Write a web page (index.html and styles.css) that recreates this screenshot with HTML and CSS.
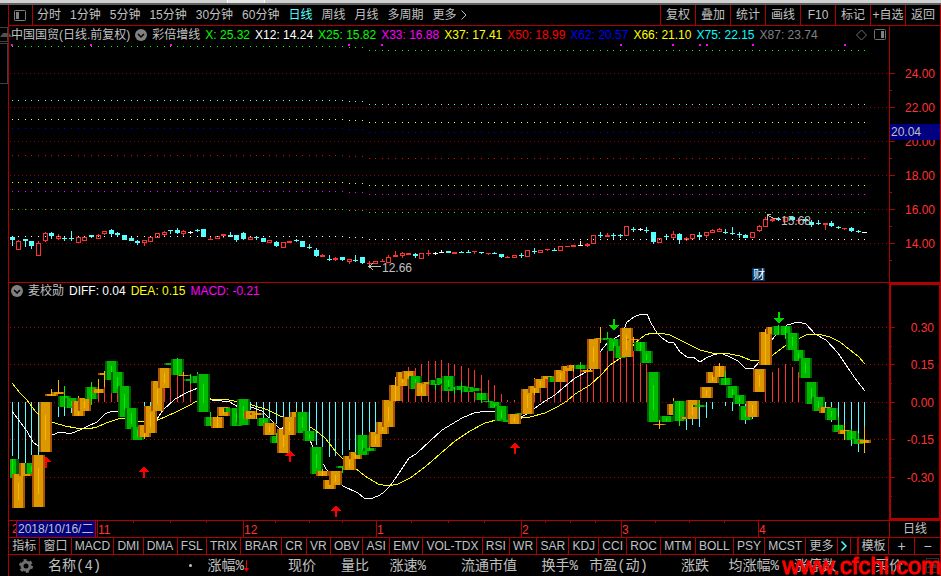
FILE: index.html
```html
<!DOCTYPE html>
<html lang="zh-CN">
<head>
    <meta charset="UTF-8">
    <meta name="viewport" content="width=device-width, initial-scale=1.0">
    <title>中国国贸 日线</title>
    <link rel="stylesheet" href="styles.css">
</head>
<body>
    <div class="window-strip"><span class="strip-tab"></span></div>
    <div class="app">
        <aside class="gutter">
            <div class="gutter-btn"></div>
            <div class="gutter-panel"></div>
        </aside>

        <main class="terminal">
            <nav class="toolbar">
                <button class="layout-btn" aria-label="布局">
                    <svg width="12" height="11" viewBox="0 0 12 11"><rect x="0.5" y="0.5" width="11" height="10" rx="1" fill="none" stroke="#808080"/><rect x="2" y="2" width="3" height="7" fill="#808080"/></svg>
                </button>
                <div class="periods">
                    <button>分时</button>
                    <button>1分钟</button>
                    <button>5分钟</button>
                    <button>15分钟</button>
                    <button>30分钟</button>
                    <button>60分钟</button>
                    <button class="active">日线</button>
                    <button>周线</button>
                    <button>月线</button>
                    <button>多周期</button>
                    <button class="more">更多
                        <svg width="6" height="10" viewBox="0 0 6 10"><path d="M0.5 0.5 L5 5 L0.5 9.5" fill="none" stroke="#c0c0c0"/></svg>
                    </button>
                </div>
                <div class="tools">
                    <button>复权</button>
                    <button>叠加</button>
                    <button>统计</button>
                    <button>画线</button>
                    <button>F10</button>
                    <button>标记</button>
                    <button>+自选</button>
                    <button>返回</button>
                </div>
            </nav>

            <section class="panel price-panel">
                <div class="plot">
                    <div class="legend">
                        <span>中国国贸(日线.前复权)</span>
                        <svg class="drop" viewBox="0 0 12 12"><circle cx="6" cy="6" r="6" fill="#808080"/><path d="M3 5 L6 8 L9 5" fill="none" stroke="#000" stroke-width="1.5"/></svg>
                        <span>彩倍增线</span>
                        <span class="green">X: 25.32</span>
                        <span class="white">X12: 14.24</span>
                        <span class="green">X25: 15.82</span>
                        <span class="magenta">X33: 16.88</span>
                        <span class="yellow">X37: 17.41</span>
                        <span class="red">X50: 18.99</span>
                        <span class="blue">X62: 20.57</span>
                        <span class="yellow">X66: 21.10</span>
                        <span class="cyan">X75: 22.15</span>
                        <span class="gray">X87: 23.74</span>
                        <svg class="legend-icons" width="32" height="12" viewBox="0 0 32 12"><path d="M6.5 1 L11.5 6 L6.5 11 L1.5 6 Z" fill="none" stroke="#707070"/><rect x="19.5" y="0.5" width="11" height="10" rx="1" fill="none" stroke="#707070"/><rect x="26" y="2" width="3" height="7" fill="#808080"/></svg>
                    </div>
                    <svg class="chart" id="price-chart"></svg>
                </div>
                <svg class="axis" id="price-axis"></svg>
            </section>

            <section class="panel macd-panel">
                <div class="plot">
                    <div class="legend">
                        <svg class="drop" viewBox="0 0 12 12"><circle cx="6" cy="6" r="6" fill="#808080"/><path d="M3 5 L6 8 L9 5" fill="none" stroke="#000" stroke-width="1.5"/></svg>
                        <span>麦校勋</span>
                        <span class="white">DIFF: 0.04</span>
                        <span class="yellow">DEA: 0.15</span>
                        <span class="magenta">MACD: -0.21</span>
                    </div>
                    <svg class="chart" id="macd-chart"></svg>
                </div>
                <svg class="axis" id="macd-axis"></svg>
            </section>

            <div class="time-row">
                <svg id="time-axis"></svg>
                <div class="time-period">日线</div>
            </div>

            <nav class="tabs">
                <div class="tab-list">
                    <button>指标</button>
                    <button>窗口</button>
                    <button>MACD</button>
                    <button>DMI</button>
                    <button>DMA</button>
                    <button>FSL</button>
                    <button>TRIX</button>
                    <button>BRAR</button>
                    <button>CR</button>
                    <button>VR</button>
                    <button>OBV</button>
                    <button>ASI</button>
                    <button>EMV</button>
                    <button>VOL-TDX</button>
                    <button>RSI</button>
                    <button>WR</button>
                    <button>SAR</button>
                    <button>KDJ</button>
                    <button>CCI</button>
                    <button>ROC</button>
                    <button>MTM</button>
                    <button>BOLL</button>
                    <button>PSY</button>
                    <button>MCST</button>
                    <button>更多</button>
                    <button aria-label="下一页"><svg width="6" height="10" viewBox="0 0 6 10"><path d="M0.5 0.5 L5 5 L0.5 9.5" fill="none" stroke="#54ffff" stroke-width="1.5"/></svg></button>
                </div>
                <button class="template">模板</button>
                <button class="zoom">+</button>
                <button class="zoom">−</button>
            </nav>

            <table class="quotes">
                <thead>
                    <tr>
                        <th class="col-gear"><svg width="14" height="14" viewBox="0 0 14 14"><circle cx="7" cy="7" r="4" fill="none" stroke="#707070" stroke-width="3"/><circle cx="7" cy="7" r="6" fill="none" stroke="#707070" stroke-width="2" stroke-dasharray="3 3.28"/></svg></th>
                        <th class="col-name">名称(4)</th>
                        <th class="col-rise"><span class="dot"></span>涨幅%<svg class="sort" width="5" height="12" viewBox="0 0 5 12"><path d="M2 0 H3 V8 H5 L2.5 12 L0 8 H2 Z" fill="#f00000"/></svg></th>
                        <th class="col-67">现价</th>
                        <th class="col-53">量比</th>
                        <th class="col-57">涨速%</th>
                        <th class="col-91">流通市值</th>
                        <th class="col-61">换手%</th>
                        <th class="col-70">市盈(动)</th>
                        <th class="col-61">涨跌</th>
                        <th class="col-70">均涨幅%</th>
                        <th class="col-57">涨停数</th>
                        <th class="col-67">买价</th>
                        <th><button class="scroll-btn" aria-label="向上"></button></th>
                    </tr>
                </thead>
            </table>
        </main>
    </div>
    <div class="watermark">www.cfchi.com</div>
    <script src="script.js"></script>
</body>
</html>
```
FILE: styles.css
```css
* {
    box-sizing: border-box;
}

body {
    margin: 0;
    min-height: 100vh;
    display: flex;
    flex-direction: column;
    position: relative;
    background: #000;
    color: #c0c0c0;
    font-family: "Liberation Sans", "Noto Sans CJK SC", sans-serif;
    font-size: 12px;
    line-height: 16px;
    overflow-x: hidden;
}

button {
    margin: 0;
    padding: 0;
    border: none;
    background: none;
    color: inherit;
    font: inherit;
    white-space: nowrap;
    cursor: pointer;
}

svg {
    display: block;
}

.window-strip {
    height: 5px;
    padding-left: 227px;
    background: #d0d0d0;
    border-bottom: 2px solid #606060;
}

.strip-tab {
    display: block;
    width: 38px;
    height: 3px;
    background: #e4e4e4;
    border-left: 1px solid #fff;
    border-right: 1px solid #fff;
}

.app {
    flex: 1;
    display: flex;
}

.gutter {
    width: 8px;
    padding-top: 22px;
}

.gutter-btn {
    height: 15px;
    border: 1px solid #404040;
    border-left: none;
}

.gutter-btn::after {
    content: "";
    display: block;
    width: 6px;
    margin-top: 5px;
    border: 3px solid transparent;
    border-top: none;
    border-bottom: 4px solid #505050;
}

.gutter-panel {
    height: 41px;
    margin-top: 1px;
    border: 1px solid #404040;
    border-left: none;
}

.terminal {
    flex: 1;
    min-width: 0;
    border-left: 1px solid #b00000;
    border-right: 1px solid #b00000;
}

/* top toolbar */
.toolbar {
    display: flex;
    height: 21px;
    border-bottom: 1px solid #b00000;
}

.layout-btn {
    width: 24px;
    padding-left: 5px;
    border-right: 1px solid #b00000;
}

.periods {
    flex: 1;
    display: flex;
    align-items: center;
    gap: 9px;
    padding-left: 4px;
}

.periods .active {
    color: #54ffff;
}

.periods .more {
    display: flex;
    align-items: center;
    gap: 4px;
}

.tools {
    display: flex;
}

.tools button {
    width: 35px;
    border-left: 1px solid #b00000;
}

/* chart panels */
.panel {
    display: flex;
}

.plot {
    flex: 1;
    min-width: 0;
}

.price-panel {
    height: 257px;
    border-bottom: 1px solid #b00000;
}

.macd-panel {
    height: 237px;
}

.legend {
    display: flex;
    align-items: center;
    gap: 5px;
    height: 18px;
    padding-left: 2px;
    white-space: nowrap;
}

.macd-panel .legend {
    height: 16px;
}

.drop {
    width: 12px;
    height: 12px;
}

.legend-icons {
    margin-left: auto;
    margin-right: 2px;
}

.green { color: #00ff00; }
.white { color: #ffffff; }
.magenta { color: #ff00ff; }
.yellow { color: #ffff00; }
.red { color: #ff0000; }
.blue { color: #0000ff; }
.cyan { color: #00ffff; }
.gray { color: #808080; }

.chart {
    width: 100%;
    height: 238px;
    shape-rendering: crispEdges;
}

.macd-panel .chart {
    height: 221px;
}

.axis {
    flex: none;
    width: 51px;
    height: 256px;
    border-left: 1px solid #b00000;
    shape-rendering: crispEdges;
}

.macd-panel .axis {
    height: 237px;
    border: 2px solid #b00000;
    border-right-width: 1px;
}

svg text {
    font-size: 12px;
}

/* dates */
.time-row {
    display: flex;
    height: 17px;
    border-top: 1px solid #b00000;
}

#time-axis {
    flex: 1;
    min-width: 0;
    height: 16px;
    shape-rendering: crispEdges;
}

.time-period {
    width: 51px;
    border-left: 1px solid #b00000;
    text-align: center;
}

/* indicator tabs */
.tabs {
    display: flex;
    height: 18px;
    border-top: 1px solid #b00000;
    border-bottom: 1px solid #b00000;
}

.tab-list {
    flex: 1;
    display: flex;
    margin-right: 6px;
    min-width: 0;
}

.tab-list button {
    flex: 1 0 auto;
    display: flex;
    align-items: center;
    justify-content: center;
    padding: 0 3px;
    border-right: 1px solid #b00000;
}

.template {
    width: 31px;
    border-left: 2px solid #b00000;
}

.zoom {
    width: 26px;
    border-left: 1px solid #b00000;
    font-size: 14px;
}

/* quote list header */
.quotes {
    width: 100%;
    table-layout: fixed;
    border-collapse: collapse;
}

.quotes th {
    height: 21px;
    padding: 0;
    font-family: "Liberation Mono", "Noto Sans CJK SC", monospace;
    font-size: 14px;
    font-weight: normal;
    line-height: 20px;
    text-align: right;
    white-space: nowrap;
}

.quotes .col-gear {
    width: 35px;
    padding-left: 10px;
}

.quotes .col-name {
    width: 135px;
    padding-left: 4px;
    text-align: left;
}

.col-rise { width: 70px; }
.col-53 { width: 53px; }
.col-57 { width: 57px; }
.col-61 { width: 61px; }
.col-67 { width: 67px; }
.col-70 { width: 70px; }
.col-91 { width: 91px; }

.dot {
    display: inline-block;
    width: 3px;
    height: 3px;
    margin-right: 16px;
    border-radius: 50%;
    background: #c0c0c0;
    vertical-align: middle;
}

.sort {
    display: inline-block;
    vertical-align: middle;
}

.scroll-btn {
    display: block;
    width: 13px;
    height: 15px;
    margin-left: auto;
    margin-right: 1px;
    border: 1px solid #303030;
}

.scroll-btn::after {
    content: "";
    display: block;
    width: 6px;
    margin: 0 auto;
    border: 3px solid transparent;
    border-top: none;
    border-bottom: 4px solid #303030;
}

.watermark {
    position: absolute;
    right: 0;
    bottom: 0;
    color: #ff0000;
    font-size: 24px;
    line-height: 20px;
    -webkit-text-stroke: 1px #ff0000;
}
```
FILE: script.js
```js
const STEP = 6.61;
const BASE_WIDTH = 880;
const FIRST = 3.6;
const LINE = '#b00000';
const COLORS = { r: '#ff3232', c: '#54ffff', w: '#ffffff' };

// kind, body top, body bottom, high, low
const candles = `c 237 240 236 246,r 241 250 240 250,c 239 241 239 247,c 241 246 241 249,r 243 256 241 256,r 233 241 232 242,c 233 236 232 239,r 236 239 234 240,c 238 239 236 241,c 238 239 231 241,
r 237 243,r 237 241,c 235 237 235 238,r 235 239 234 239,r 231 234 231 235,c 230 234 229 236,c 233 235 232 237,c 235 240,c 238 241 237 241,c 241 243 240 245,
r 240 243 240 246,r 237 242,r 233 238,r 232 235 231 236,c 230 231 230 234,c 230 233 228 234,r 231 234 230 236,w 232 233 231 234,c 230 231 229 232,c 229 237,
r 239 240 237 240,r 236 239,r 234 236 234 238,c 235 237 232 237,c 235 240 235 242,c 233 239 232 240,r 237 240,c 237 238 236 240,c 238 242,r 240 243,
c 242 246 241 247,r 242 248,r 241 243,c 240 241 239 242,c 241 247,c 247 248 244 249,c 250 256 248 257,r 255 257 254 257,c 259 260 255 261,r 258 260 257 261,
c 257 260 257 261,r 259 262 259 264,c 260 261 255 262,c 257 263 257 264,r 263 264 261 265,r 261 264,r 261 262 259 262,r 257 263 255 263,r 255 257 251 257,r 253 256 252 258,
r 253 255,c 254 256 253 258,r 253 259,r 253 254 250 256,w 253 254 252 255,w 252 253 250 253,c 251 253,r 252 254,c 252 253 251 253,c 252 253 250 253,
r 251 252 251 254,c 252 253 252 254,r 253 254 253 255,c 253 254 252 254,c 254 257 254 258,r 257 258 256 258,r 255 258,c 255 256 253 258,r 250 257,c 251 252 248 254,
r 250 253,r 249 250 249 251,c 250 251 248 251,r 246 251,r 246 247,r 245 247,w 245 246 241 246,r 244 246 243 247,r 235 244,c 235 236 232 238,
r 235 237 233 237,c 235 236 233 240,c 235 236 234 238,r 226 236,c 229 230 227 232,w 229 230 228 231,c 230 231 227 233,c 232 242 232 244,r 238 243,c 236 237 234 239,
r 234 238 231 240,c 234 240 233 244,r 238 240 237 241,r 234 239,c 235 237 232 240,r 232 236 232 238,r 230 233 229 233,r 229 232 228 232,c 232 233 229 234,c 233 234 227 235,
c 234 235 232 238,c 235 238 234 238,r 232 238,r 226 231 225 232,r 219 227 217 227,r 219 221 218 222,c 219 220 217 221,r 217 222,c 217 220 216 221,r 220 221 218 224,
c 219 221 217 222,c 222 225 220 227,c 223 224 220 225,r 223 225 223 230,c 223 226 221 227,c 227 228 226 229,r 228 229 228 230,c 228 231 227 232,c 231 232 230 233,w 232 233`;

const macdBars = `g 459 478 459 487,o 474 508,o 463 476,g 463 474,o 455 507,o 402 452,o 394 396 389 396,o 392 394 380 394,g 396 407 386 407,g 398 408,
o 401 416 396 416,o 398 411,g 387 399 382 405,o 389 393 379 393,o 373 375 371 387,g 361 380,g 372 393,g 386 417,g 408 429,g 427 440,
o 425 437 425 439,o 406 433,o 381 411,o 368 388,g 363 365,g 359 375 358 375,o 375 376 372 376,g 379 381 374 384,g 376 383 372 383,g 374 412,
g 417 426 412 426,o 417 428 413 428,o 407 416,g 408 412,g 408 426,g 399 425,o 411 419,o 413 415 410 419,g 418 426,o 423 435,
g 436 443 433 443,o 429 453,o 417 435,o 412 417 409 417,g 412 433,g 431 441,g 447 474,o 471 476 469 476,o 480 489,o 471 485,
g 466 468 466 473,o 456 470,o 452 459,g 435 455,g 448 451 446 451,o 432 447,o 422 434,o 400 427,o 385 401 377 401,o 372 386,
o 371 379,g 376 389,o 383 396,o 382 384,g 380 385 379 390,g 378 384,g 376 391,g 387 389 387 394,g 386 390 382 394,g 387 392,
g 388 391,g 393 400 393 403,g 401 402 399 405,g 402 408,g 406 421,g 420 422,o 414 424,g 413 414 410 415,o 389 414,o 386 393 378 395,
o 379 388,o 376 379,g 377 382 375 382,o 370 382,o 366 371,o 365 368 365 372,g 365 369 362 369,o 370 372 367 372,o 339 369,o 338 339 327 343,
g 338 340 332 340,g 339 351,g 346 358,o 328 357,o 339 340 337 343,g 342 351 342 353,g 351 363,g 372 422,o 424 425 420 429,g 416 422,
o 404 415 398 416,g 401 421 401 426,o 417 419,o 400 419,g 405 407 400 407,o 387 398,o 372 383,o 366 377 363 377,g 378 385 371 385,g 386 398,
g 395 404,g 406 420,o 401 417,o 369 392,o 332 365 329 365,o 327 334,g 326 335 325 335,g 326 335 326 339,g 333 350,g 350 361,
g 358 378,g 382 404,g 397 411,o 407 413 407 417,g 408 420,g 425 432 417 432,o 430 434 425 440,g 431 440 429 440,g 439 444 433 444,o 440 443 427 452`;

// bar index -> end of the histogram stick
const sticks = {
    0: 456, 1: 459, 2: 463, 3: 455, 4: 455, 6: 426, 7: 417, 8: 416, 9: 413, 13: 389, 14: 380, 15: 381, 16: 393, 20: 413, 21: 411,
    23: 380, 24: 368, 25: 376, 26: 375, 27: 376, 28: 383, 29: 400, 36: 410, 37: 411, 38: 418, 39: 422, 40: 424, 41: 426, 42: 417,
    43: 412, 44: 412, 45: 431, 46: 445, 47: 449, 48: 457, 49: 456, 50: 455, 51: 450, 52: 452, 53: 435, 54: 448, 55: 432, 56: 422,
    58: 400, 59: 386, 60: 367, 61: 368, 62: 364, 63: 361, 64: 361, 65: 360, 66: 363, 67: 364, 68: 366, 69: 368, 70: 370, 71: 375,
    72: 380, 73: 385, 74: 394, 75: 400, 76: 400, 79: 393, 80: 388, 81: 379, 82: 380, 83: 379, 84: 371, 85: 368, 86: 369, 87: 371,
    88: 369, 89: 352, 90: 350, 91: 351, 92: 358, 93: 355, 94: 351, 95: 356, 96: 364, 102: 430, 103: 425, 104: 427, 105: 418,
    106: 409, 108: 406, 109: 411, 110: 406, 111: 424, 112: 419, 114: 383, 115: 372, 116: 368, 117: 364, 118: 367, 119: 372,
    123: 407, 124: 422, 125: 425, 126: 434, 127: 446, 128: 452, 129: 453
};

const diff = '12,411 20,422 27,431 33,442 38,446 45,442 52,435 60,432 66,433 72,433 80,430 88,426 97,422 105,414 112,411 120,411 130,418 140,427 148,430 155,422 163,410 175,399 188,392 198,388 212,400 222,401 230,402 238,407 248,406 262,411 272,421 280,429 290,425 300,424 310,440 316,455 322,462 328,472 337,481 343,486 358,493 364,498 370,499 378,496 383,493 390,486 397,476 409,458 416,454 430,441 442,430 452,424 462,418 474,413 480,412 495,411 505,413 512,417 520,418 528,413 535,408 545,401 555,395 563,388 575,378 590,370 600,352 608,342 615,338 622,334 627,322 634,317 641,314 647,314 651,323 657,333 662,338 668,342 674,343 680,352 687,357 693,357 700,362 706,358 713,355 720,353 728,356 738,361 745,368 753,369 760,361 768,345 775,336 787,325 798,322 806,324 815,334 826,340 838,353 848,368 857,381 865,391';
const dea = '12,383 20,393 27,400 35,411 45,420 55,423 65,426 76,428 88,429 97,427 106,423 118,419 130,418 138,421 148,422 155,421 165,417 178,411 190,405 200,399 212,399 225,399 238,402 252,405 268,410 280,416 292,420 305,424 315,430 325,438 336,452 345,461 355,468 365,476 378,484 388,486 398,484 410,478 425,467 440,454 455,441 470,431 485,423 500,419 515,419 530,417 545,413 557,407 567,401 575,394 590,385 602,374 610,365 625,355 635,343 645,335 652,333 660,333 670,335 680,340 690,345 700,350 712,353 725,353 740,356 750,360 765,361 773,355 785,346 798,339 806,335 818,334 830,337 840,342 850,350 858,356 865,364';

// colour, level before and after the ex-dividend day
const levels = [
    ['#00ff00', 46, 50], ['#54ffff', 100, 104], ['#ffff54', 119, 122], ['#0000ff', 128, 132], ['#ff0000', 155, 158],
    ['#ffff00', 182, 185], ['#ff00ff', 191, 194], ['#00ff00', 209, 212], ['#ffffff', 236, 239]
];

let scale = 1;

function parse(text) {
    return text.split(',').map(row => {
        const [kind, ...n] = row.trim().split(' ');
        const [top, bottom, high = n[0], low = n[1]] = n;
        return { kind, top: +top, bottom: +bottom, high: +high, low: +low };
    });
}

const barX = i => Math.round((FIRST + i * STEP) * scale) - 1;
const posX = x => Math.round((x - 9) * scale);
const rect = (x, y, w, h, fill) => `<rect x="${x}" y="${y}" width="${w}" height="${h}" fill="${fill}"/>`;
const label = (x, y, fill, text, anchor = 'start') => `<text x="${x}" y="${y}" fill="${fill}" text-anchor="${anchor}">${text}</text>`;
const grid = (y, color) => `<line x1="1" x2="100%" y1="${y + 0.5}" y2="${y + 0.5}" stroke="${color}" stroke-dasharray="1 3"/>`;

function draw(id, top, content) {
    document.getElementById(id).innerHTML = `<g transform="translate(0 ${-top})">${content}</g>`;
}

function drawPrice() {
    let out = '';
    [73, 107, 141, 175, 209, 243].forEach(y => out += grid(y, '#900000'));
    parse(candles).forEach((c, i) => {
        const x = barX(i);
        const color = COLORS[c.kind];
        const height = Math.max(1, c.bottom - c.top);
        out += rect(x, c.high, 1, c.low - c.high, color);
        if (c.kind === 'r' && height > 2) {
            out += `<rect x="${x - 1.5}" y="${c.top + 0.5}" width="4" height="${height - 1}" fill="#000" stroke="${color}"/>`;
        } else {
            out += rect(x - 2, c.top, 5, height, color);
        }
    });
    levels.forEach(([color, before, after]) => {
        for (let i = 0; i < 130; i++) {
            const y = i < 51 ? before : i < 54 ? before + 1 : after;
            out += rect(barX(i), y, 1, 1, color);
        }
    });
    [12, 91, 171, 349, 382, 621, 673, 700, 707, 753, 845].forEach(x => out += rect(posX(x) - 1, 44, 2, 2, '#ff00ff'));

    const low = posX(369);
    out += `<path d="M${low} 266.5 h12 M${low + 4} 263.5 L${low} 266.5 L${low + 4} 269.5" fill="none" stroke="#c0c0c0"/>`;
    out += label(posX(382), 272, '#c0c0c0', '12.66');
    const high = posX(766);
    out += `<path d="M${high + 5} 214.5 h-4 v5 M${high + 1} 215 L${high + 8} 218.5 H${high + 14}" fill="none" stroke="#c0c0c0"/>`;
    out += label(posX(781), 225, '#c0c0c0', '15.68');
    const badge = posX(752);
    out += rect(badge, 268, 13, 13, '#003366') + label(badge + 1, 279, '#ffffff', '财');
    draw('price-chart', 44, out);
}

function drawMacd() {
    let out = '';
    [327, 364, 402, 439, 477].forEach(y => out += grid(y, '#b00000'));
    Object.entries(sticks).forEach(([i, end]) => {
        out += end > 402 ? rect(barX(+i), 402, 1, end - 402, '#54ffff') : rect(barX(+i), end, 1, 402 - end, '#ff3232');
    });
    [[diff, '#ffffff'], [dea, '#ffff00']].forEach(([points, color]) => {
        const path = points.split(' ').map(p => {
            const [x, y] = p.split(',');
            return `${posX(x)},${y}`;
        }).join(' ');
        out += `<polyline points="${path}" fill="none" stroke="${color}"/>`;
    });
    [[46, 456], [144, 466], [290, 450], [336, 505], [515, 442]].forEach(([x, y]) => out += arrow(x, y, 1, '#ff0000'));
    [[614, 331], [779, 324]].forEach(([x, y]) => out += arrow(x, y, -1, '#00d800'));
    parse(macdBars).forEach((b, i) => {
        const x = barX(i);
        const [edge, body, core] = b.kind === 'o' ? ['#a85400', '#dc9800', '#ffb400'] : ['#006000', '#00b800', '#00f000'];
        const height = b.bottom - b.top;
        const left = Math.max(1, x - 6);
        out += rect(left, b.top, x + 7 - left, height, edge);
        out += rect(Math.max(1, x - 4), b.top, x < 5 ? 6 : 9, height, body);
        if (b.high < b.top || b.low > b.bottom) {
            out += rect(x, b.high, 1, b.low - b.high, core);
        } else if (height > 5) {
            out += rect(x, b.top + Math.round(height / 4), 1, Math.round(height / 2), core);
        }
    });
    draw('macd-chart', 299, out);
}

function arrow(x, y, dir, color) {
    const c = posX(x);
    return `<path d="M${c} ${y} L${c + 5} ${y + 6 * dir} H${c + 1} V${y + 12 * dir} H${c - 1} V${y + 6 * dir} H${c - 5} Z" fill="${color}"/>`;
}

function drawAxes() {
    let out = '';
    for (let i = 0; i < 6; i++) {
        const y = 73 + i * 34;
        out += rect(0, y, 5, 1, LINE) + rect(0, y + 17, 2, 1, LINE);
        out += label(45, y + 5, '#ff3232', (24 - i * 2).toFixed(2), 'end');
    }
    out += rect(0, 124, 50, 16, '#000080') + label(1, 136, '#c0c0c0', '20.04');
    draw('price-axis', 26, out);

    out = '';
    [['0.30', 327], ['0.15', 364], ['0.00', 402], ['-0.15', 439], ['-0.30', 477]].forEach(([text, y]) => {
        out += rect(0, y, 4, 1, LINE) + rect(0, y + 19, 1, 1, LINE) + label(43, y + 5, '#ff3232', text, 'end');
    });
    draw('macd-axis', 285, out);
}

function drawTime() {
    let out = label(posX(12), 12, '#ff3232', '2');
    [[97, '11'], [243, '12'], [376, '1'], [521, '2'], [621, '3'], [758, '4']].forEach(([x, text]) => {
        out += rect(posX(x), 0, 1, 16, LINE) + label(posX(x) + 1, 13, '#ff3232', text);
    });
    [133, 170, 206, 275, 309, 342, 411, 448, 484, 545, 570, 595, 655, 689, 724].forEach(x => out += rect(posX(x), 0, 1, 2, LINE));
    const x = posX(17);
    out += rect(x - 1, 0, 80, 16, LINE) + rect(x, 0, 78, 16, '#000080') + label(x + 1, 12, '#c0c0c0', '2018/10/16/二');
    draw('time-axis', 0, out);
}

function drawAll() {
    scale = document.getElementById('price-chart').clientWidth / BASE_WIDTH;
    drawPrice();
    drawMacd();
    drawAxes();
    drawTime();
}

window.addEventListener('resize', drawAll);
drawAll();
```
